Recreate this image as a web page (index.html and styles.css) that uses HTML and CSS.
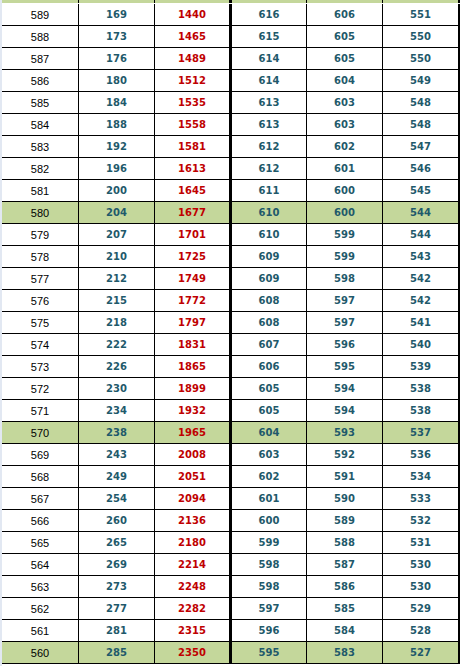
FILE: index.html
```html
<!DOCTYPE html>
<html>
<head>
<meta charset="utf-8">
<link rel="stylesheet" href="styles.css">
</head>
<body>
<div class="sheet">
  <div class="row top-strip"><div class="c"></div><div class="c"></div><div class="c thick"></div><div class="c"></div><div class="c"></div><div class="c thick"></div></div>
  <div id="rows" class="rows"></div>
</div>
<script src="script.js"></script>
</body>
</html>
```
FILE: styles.css
```css
html, body {
  margin: 0;
  padding: 0;
  background: #ffffff;
}
.sheet {
  width: 460px;
  height: 666px;
  overflow: hidden;
  border-left: 2px solid #e2e8f2;
  box-sizing: border-box;
}
.rows {
  padding-top: 1px;
}
.row {
  display: grid;
  grid-template-columns: 77px 76px 77px 75px 76px 78px;
  height: 22px;
  border-bottom: 1px solid #000;
  box-sizing: border-box;
}
.row.hl {
  background: #c4d79b;
}
.top-strip {
  height: 3px;
  background: #c4d79b;
  border-bottom: none;
}
.c {
  border-right: 1px solid #000;
  display: flex;
  align-items: center;
  justify-content: center;
  box-sizing: border-box;
  font-family: "DejaVu Sans", Verdana, sans-serif;
  font-weight: bold;
  font-size: 10px;
  color: #1f5a6b;
  line-height: 1;
  padding-top: 1px;
}
.c.thick {
  border-right: 3px solid #000;
}
.c.first {
  font-family: "Liberation Sans", Arial, sans-serif;
  font-weight: normal;
  font-size: 11px;
  color: #000;
}
.c.red {
  color: #c00000;
}
```
FILE: script.js
```js
const data = [
  [589,169,1440,616,606,551],
  [588,173,1465,615,605,550],
  [587,176,1489,614,605,550],
  [586,180,1512,614,604,549],
  [585,184,1535,613,603,548],
  [584,188,1558,613,603,548],
  [583,192,1581,612,602,547],
  [582,196,1613,612,601,546],
  [581,200,1645,611,600,545],
  [580,204,1677,610,600,544],
  [579,207,1701,610,599,544],
  [578,210,1725,609,599,543],
  [577,212,1749,609,598,542],
  [576,215,1772,608,597,542],
  [575,218,1797,608,597,541],
  [574,222,1831,607,596,540],
  [573,226,1865,606,595,539],
  [572,230,1899,605,594,538],
  [571,234,1932,605,594,538],
  [570,238,1965,604,593,537],
  [569,243,2008,603,592,536],
  [568,249,2051,602,591,534],
  [567,254,2094,601,590,533],
  [566,260,2136,600,589,532],
  [565,265,2180,599,588,531],
  [564,269,2214,598,587,530],
  [563,273,2248,598,586,530],
  [562,277,2282,597,585,529],
  [561,281,2315,596,584,528],
  [560,285,2350,595,583,527]
];
const host = document.getElementById('rows');
data.forEach(r => {
  const row = document.createElement('div');
  row.className = 'row' + (r[0] % 10 === 0 ? ' hl' : '');
  r.forEach((v, i) => {
    const c = document.createElement('div');
    let cls = 'c';
    if (i === 0) cls += ' first';
    if (i === 2) cls += ' red thick';
    if (i === 5) cls += ' thick';
    c.className = cls;
    c.textContent = v;
    row.appendChild(c);
  });
  host.appendChild(row);
});
```
